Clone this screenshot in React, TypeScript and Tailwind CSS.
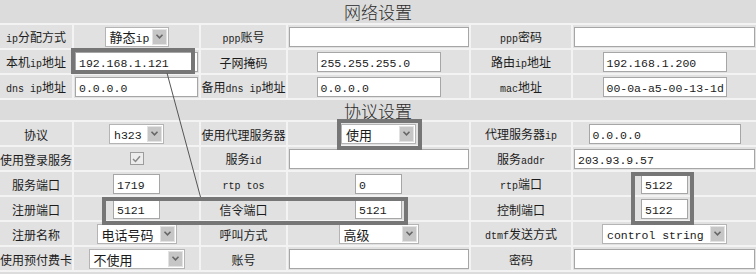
import type { ReactNode } from "react";

type Cell =
  | { kind: "label"; text: string }
  | { kind: "input"; value: string; w: string }
  | { kind: "select"; value: string; w: string }
  | { kind: "check" };

const CJK = /([\u3400-\u9fff\uff00-\uffef]+)/;

// SimSun-like mix: CJK in Noto, latin in a narrow mono, kept on one baseline
function Txt({ text, field }: { text: string; field?: boolean }) {
  const parts = text.split(CJK).filter(Boolean);
  return (
    <span className="whitespace-pre leading-none">
      {parts.map((p, i) =>
        CJK.test(p) ? (
          <span
            key={i}
            className={
              field
                ? "font-['Noto_Sans_CJK_SC',sans-serif] text-[13px]"
                : "font-['Noto_Sans_CJK_SC',sans-serif] text-[12px]"
            }
          >
            {p}
          </span>
        ) : (
          <span
            key={i}
            className={
              field
                ? "font-['Liberation_Mono',monospace] text-[11.5px]"
                : "font-['Liberation_Mono',monospace] text-[10px]"
            }
          >
            {p}
          </span>
        ),
      )}
    </span>
  );
}

const L = (text: string): Cell => ({ kind: "label", text });
const I = (value: string, w: string): Cell => ({ kind: "input", value, w });
const S = (value: string, w: string): Cell => ({ kind: "select", value, w });

const network: Cell[][] = [
  [L("ip分配方式"), S("静态ip", "w-[64px]"), L("ppp账号"), I("", "w-[180px]"), L("ppp密码"), I("", "w-[181px]")],
  [L("本机ip地址"), I("192.168.1.121", "w-[123px]"), L("子网掩码"), I("255.255.255.0", "w-[124px]"), L("路由ip地址"), I("192.168.1.200", "w-[124px]")],
  [L("dns ip地址"), I("0.0.0.0", "w-[123px]"), L("备用dns ip地址"), I("0.0.0.0", "w-[124px]"), L("mac地址"), I("00-0a-a5-00-13-1d", "w-[124px]")],
];

const protocol: Cell[][] = [
  [L("协议"), S("h323", "w-[55px]"), L("使用代理服务器"), S("使用", "w-[75px]"), L("代理服务器ip"), I("0.0.0.0", "w-[152px]")],
  [L("使用登录服务"), { kind: "check" }, L("服务id"), I("", "w-[180px]"), L("服务addr"), I("203.93.9.57", "w-[181px]")],
  [L("服务端口"), I("1719", "w-[47px]"), L("rtp tos"), I("0", "w-[47px]"), L("rtp端口"), I("5122", "w-[47px]")],
  [L("注册端口"), I("5121", "w-[47px]"), L("信令端口"), I("5121", "w-[47px]"), L("控制端口"), I("5122", "w-[47px]")],
  [L("注册名称"), S("电话号码", "w-[80px]"), L("呼叫方式"), S("高级", "w-[80px]"), L("dtmf发送方式"), S("control string", "w-[125px]")],
  [L("使用预付费卡"), S("不使用", "w-[96px]"), L("账号"), I("", "w-[180px]"), L("密码"), I("", "w-[181px]")],
];

function Arrow() {
  return (
    <span className="ml-auto mr-[1px] flex h-[16px] w-[15px] shrink-0 items-center justify-center border border-[#e2e2e2] bg-[#c6c6c6]">
      <svg width="9" height="7" viewBox="0 0 9 7" aria-hidden="true">
        <path d="M1.5 1.8 L4.5 4.8 L7.5 1.8" fill="none" stroke="#666" strokeWidth="1.6" />
      </svg>
    </span>
  );
}

function Field({ cell }: { cell: Cell }) {
  if (cell.kind === "label") {
    return (
      <div className="flex h-[23px] items-center justify-center whitespace-nowrap bg-[#e1e1e1] leading-none text-[#1c1c1c]">
        <Txt text={cell.text} />
      </div>
    );
  }
  let inner: ReactNode = null;
  if (cell.kind === "input") {
    inner = (
      <div
        className={`flex h-[20px] items-center whitespace-nowrap border border-[#a6a6a6] bg-white px-[3px] leading-none text-[#1a1a1a] ${cell.w}`}
      >
        <Txt text={cell.value} field />
      </div>
    );
  } else if (cell.kind === "select") {
    inner = (
      <div
        className={`flex h-[20px] items-center whitespace-nowrap border border-[#b4b4b4] bg-white pl-[4px] leading-none text-[#1a1a1a] ${cell.w}`}
      >
        <Txt text={cell.value} field />
        <Arrow />
      </div>
    );
  } else {
    inner = (
      <span className="flex h-[13px] w-[14px] items-center justify-center border border-[#9c9c9c] bg-[#ececec]">
        <svg width="9" height="8" viewBox="0 0 9 8" aria-hidden="true">
          <path d="M1 4 L3.5 6.5 L8 1.2" fill="none" stroke="#8a8a8a" strokeWidth="1.5" />
        </svg>
      </span>
    );
  }
  return <div className="flex h-[23px] items-center justify-center bg-[#e1e1e1]">{inner}</div>;
}

function Title({ text, tall }: { text: string; tall?: boolean }) {
  return (
    <div
      className={`col-span-6 flex items-center justify-center bg-[#dcdcdc] font-['Noto_Sans_CJK_SC',sans-serif] text-[17px] font-light leading-none text-[#2a2a2a] ${
        tall ? "h-[23px]" : "h-[20px]"
      }`}
    >
      {text}
    </div>
  );
}

export default function App() {
  return (
    <div className="relative h-[274px] w-[756px] overflow-hidden bg-[#f3f3f3]">
      <div className="grid grid-cols-[72px_125px_85px_181px_100px_183px] gap-[2px]">
        <Title text="网络设置" tall />
        {network.flat().map((c, i) => (
          <Field key={`n${i}`} cell={c} />
        ))}
        <Title text="协议设置" />
        {protocol.flat().map((c, i) => (
          <Field key={`p${i}`} cell={c} />
        ))}
        <Title text="其他设置" />
      </div>

      {/* annotation marks over the form */}
      <div className="pointer-events-none absolute left-[71px] top-[48px] h-[26px] w-[124px] border-[4px] border-[#767676]" />
      <div className="pointer-events-none absolute left-[337px] top-[119px] h-[31px] w-[85px] border-[4px] border-[#767676]" />
      <div className="pointer-events-none absolute left-[631px] top-[172px] h-[53px] w-[63px] border-[4px] border-[#767676]" />
      <div className="pointer-events-none absolute left-[102px] top-[197px] h-[28px] w-[306px] border-[4px] border-[#767676]" />
      <svg className="pointer-events-none absolute left-0 top-0" width="756" height="274" aria-hidden="true">
        <line x1="167" y1="73" x2="200.5" y2="197" stroke="#555" strokeWidth="1" />
      </svg>
    </div>
  );
}
